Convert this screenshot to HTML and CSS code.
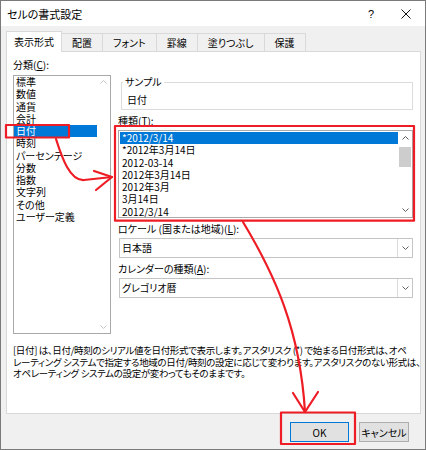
FILE: index.html
```html
<!DOCTYPE html>
<html lang="ja">
<head>
<meta charset="utf-8">
<title>セルの書式設定</title>
<link rel="stylesheet" href="styles.css">
</head>
<body>
<div class="window">
  <div class="titlebar">
    <span class="title">セルの書式設定</span>
    <span class="ctrl help">?</span>
    <span class="ctrl close"><svg width="10" height="10" viewBox="0 0 10 10"><path d="M0.5 0.5L9.5 9.5M9.5 0.5L0.5 9.5" stroke="#111" stroke-width="1" fill="none"/></svg></span>
  </div>
  <div class="main">
    <div class="tabs">
      <div class="tab active">表示形式</div>
      <div class="tab">配置</div>
      <div class="tab">フォント</div>
      <div class="tab">罫線</div>
      <div class="tab">塗りつぶし</div>
      <div class="tab">保護</div>
    </div>
    <div class="panel">
      <div class="cols">
        <div class="left">
          <div class="label">分類(<u>C</u>):</div>
          <div class="listbox catlist">
            <ul class="items">
              <li>標準</li>
              <li>数値</li>
              <li>通貨</li>
              <li>会計</li>
              <li class="sel">日付</li>
              <li>時刻</li>
              <li>パーセンテージ</li>
              <li>分数</li>
              <li>指数</li>
              <li>文字列</li>
              <li>その他</li>
              <li>ユーザー定義</li>
            </ul>
            <div class="vscroll disabled">
              <span class="sbtn"><svg width="7" height="4" viewBox="0 0 7 4"><polyline points="0.5,3.5 3.5,0.5 6.5,3.5" fill="none" stroke="currentColor" stroke-width="1"/></svg></span>
              <span class="sfill"></span>
              <span class="sbtn"><svg width="7" height="4" viewBox="0 0 7 4"><polyline points="0.5,0.5 3.5,3.5 6.5,0.5" fill="none" stroke="currentColor" stroke-width="1"/></svg></span>
            </div>
          </div>
        </div>
        <div class="right">
          <fieldset class="sample">
            <legend>サンプル</legend>
            <div class="sample-value">日付</div>
          </fieldset>
          <div class="label gap-top">種類(<u>T</u>):</div>
          <div class="listbox typelist">
            <ul class="items">
              <li class="sel">*2012/3/14</li>
              <li>*2012年3月14日</li>
              <li>2012-03-14</li>
              <li>2012年3月14日</li>
              <li>2012年3月</li>
              <li>3月14日</li>
              <li>2012/3/14</li>
            </ul>
            <div class="vscroll">
              <span class="sbtn"><svg width="7" height="4" viewBox="0 0 7 4"><polyline points="0.5,3.5 3.5,0.5 6.5,3.5" fill="none" stroke="currentColor" stroke-width="1"/></svg></span>
              <span class="thumb"></span>
              <span class="sfill"></span>
              <span class="sbtn"><svg width="7" height="4" viewBox="0 0 7 4"><polyline points="0.5,0.5 3.5,3.5 6.5,0.5" fill="none" stroke="currentColor" stroke-width="1"/></svg></span>
            </div>
          </div>
          <div class="label gap-top">ロケール (国または地域)(<u>L</u>):</div>
          <div class="combo">
            <span class="combo-text">日本語</span>
            <span class="combo-btn"><svg width="7" height="4" viewBox="0 0 7 4"><polyline points="0.5,0.5 3.5,3.5 6.5,0.5" fill="none" stroke="currentColor" stroke-width="1"/></svg></span>
          </div>
          <div class="label gap-top">カレンダーの種類(<u>A</u>):</div>
          <div class="combo">
            <span class="combo-text">グレゴリオ暦</span>
            <span class="combo-btn"><svg width="7" height="4" viewBox="0 0 7 4"><polyline points="0.5,0.5 3.5,3.5 6.5,0.5" fill="none" stroke="currentColor" stroke-width="1"/></svg></span>
          </div>
        </div>
      </div>
      <div class="desc">
        <div class="line">[日付] は、日付/時刻のシリアル値を日付形式で表示します。アスタリスク (*) で始まる日付形式は、オペ</div>
        <div class="line">レーティング システムで指定する地域の日付/時刻の設定に応じて変わります。アスタリスクのない形式は、</div>
        <div class="line">オペレーティング システムの設定が変わってもそのままです。</div>
      </div>
    </div>
    <div class="buttons">
      <button class="btn ok">OK</button>
      <button class="btn cancel">キャンセル</button>
    </div>
  </div>
  <svg class="annot" width="426" height="450" viewBox="0 0 426 450">
    <g fill="none" stroke="#ee1c24" stroke-width="2.2" stroke-linecap="round" stroke-linejoin="round">
      <rect x="6" y="125" width="63" height="12.5"/>
      <rect x="115" y="126" width="299" height="94.7"/>
      <rect x="281" y="412.5" width="74" height="31.5"/>
      <path d="M56,139 C62,158 70,181 84,180 L112,177"/>
      <path d="M94,171 L112,177 L96,190"/>
      <path d="M243,222 C275,275 300,330 305,412"/>
      <path d="M293,393 L305,412 L318,392"/>
    </g>
  </svg>
</div>
</body>
</html>
```

FILE: styles.css
```css
* {
  box-sizing: border-box;
}

body {
  margin: 0;
  font-family: "Noto Sans CJK JP", "Noto Sans", sans-serif;
  font-size: 10px;
  color: #000;
  font-feature-settings: "palt";
}

.window {
  position: relative;
  width: 426px;
  height: 450px;
  border: 1px solid #7a7a7a;
  background: #f0f0f0;
  display: flex;
  flex-direction: column;
  overflow: hidden;
}

.titlebar {
  height: 25px;
  flex: none;
  background: #fff;
  display: flex;
  align-items: center;
  padding: 0 4px 0 6px;
}

.title {
  flex: 1;
  font-size: 11px;
  line-height: 14px;
}

.ctrl {
  width: 30px;
  height: 25px;
  display: flex;
  align-items: center;
  justify-content: center;
}

.help {
  font-family: "Liberation Sans", sans-serif;
  font-size: 11px;
  margin-right: 5px;
}

.main {
  flex: 1;
  display: flex;
  flex-direction: column;
  padding: 5px 4px 0 5px;
}

.tabs {
  display: flex;
  align-items: flex-start;
  height: 20px;
}

.tab {
  margin-top: 2px;
  height: 18px;
  line-height: 17px;
  padding: 0 10px;
  border: 1px solid #d9d9d9;
  border-bottom: none;
  margin-left: -1px;
  background: #f0f0f0;
  white-space: nowrap;
}

.tab.active {
  position: relative;
  z-index: 2;
  margin-top: 0;
  margin-left: 0;
  height: 21px;
  line-height: 20px;
  padding: 0 7px;
  background: #fff;
}

.panel {
  width: 415px;
  height: 363px;
  flex: none;
  background: #fff;
  border: 1px solid #d9d9d9;
  padding: 7px 7px 0 6px;
}

.cols {
  display: flex;
  gap: 7px;
}

.left {
  width: 98px;
  flex: none;
}

.right {
  flex: 1;
  padding-top: 17px;
}

.label {
  height: 12px;
  line-height: 12px;
  white-space: nowrap;
  margin-bottom: 4px;
}

.right .label {
  margin-bottom: 3px;
}

.gap-top {
  margin-top: 5px;
}

.listbox {
  display: flex;
  background: #fff;
  border: 1px solid #a9a9a9;
  overflow: hidden;
}

.catlist {
  height: 259px;
}

.typelist {
  height: 88px;
  padding: 1px 0 1px 1px;
}

.items {
  list-style: none;
  margin: 0;
  padding: 0;
  flex: 1;
  min-width: 0;
}

.items li {
  height: 12.25px;
  line-height: 12.25px;
  padding-left: 2px;
  white-space: nowrap;
}

.items li.sel {
  background: #0078d7;
  color: #fff;
}

.vscroll {
  width: 14px;
  flex: none;
  display: flex;
  flex-direction: column;
  align-items: center;
  color: #606060;
}

.vscroll.disabled {
  color: #c8c8c8;
  width: 13px;
}

.sbtn {
  height: 12px;
  width: 100%;
  display: flex;
  align-items: center;
  justify-content: center;
}

.sfill {
  flex: 1;
}

.thumb {
  width: 12px;
  height: 20px;
  margin-top: 3px;
  background: #cdcdcd;
}

.sample {
  margin: 0 0 0 3px;
  padding: 0 0 2px 1px;
  border: 1px solid #dcdcdc;
  height: 34px;
}

.sample legend {
  padding: 0 2px;
  line-height: 12px;
}

.sample-value {
  margin: 6px 0 0 4px;
  line-height: 12px;
}

.combo {
  display: flex;
  height: 20px;
  margin-left: 1px;
  border: 1px solid #c4c4c4;
  background: #fff;
}

.combo-text {
  flex: 1;
  padding-left: 2px;
  line-height: 18px;
}

.combo-btn {
  width: 15px;
  border-left: 1px solid #dcdcdc;
  display: flex;
  align-items: center;
  justify-content: center;
  color: #606060;
}

.desc {
  margin-top: 11px;
  line-height: 11.5px;
  font-size: 9.5px;
  letter-spacing: -0.35px;
}

.line {
  white-space: nowrap;
  height: 11.5px;
}

.buttons {
  display: flex;
  justify-content: flex-end;
  gap: 10px;
  margin-top: 8px;
  padding-right: 12px;
}

.btn {
  height: 20px;
  padding: 0;
  font-family: inherit;
  font-size: 10px;
  font-feature-settings: "palt";
  color: #000;
  background: #e1e1e1;
  border: 1px solid #adadad;
}

.btn.ok {
  width: 59px;
  border-color: #0078d7;
}

.btn.cancel {
  width: 50px;
}

.annot {
  position: absolute;
  left: -1px;
  top: -1px;
  pointer-events: none;
}
```
